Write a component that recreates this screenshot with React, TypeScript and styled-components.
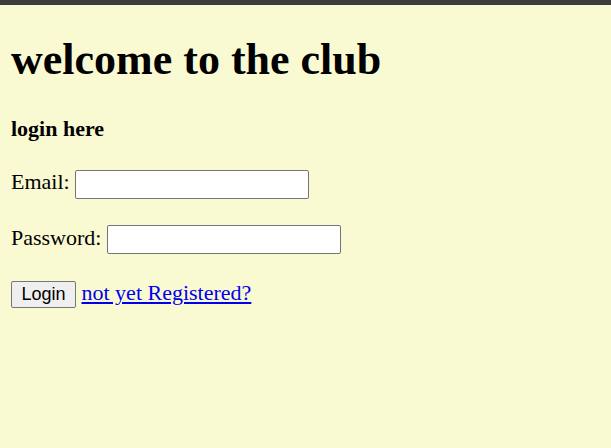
import React from "react";
import styled, { createGlobalStyle } from "styled-components";

const Global = createGlobalStyle`
  html, body { margin: 0; padding: 0; }
  body {
    background: #fafad2;
    font-family: "Liberation Serif", "Times New Roman", serif;
    color: #000;
    min-height: 448px;
  }
`;

const TopBar = styled.div`
  height: 5px;
  background: #3c3c3c;
`;

const Page = styled.main`
  padding: 0 11px;
  display: flow-root;
`;

const Title = styled.h1`
  font-size: 44px;
  font-weight: bold;
  margin: 29px 0 31px;
`;

const Subtitle = styled.h3`
  font-size: 22px;
  font-weight: bold;
  margin: 0 0 27px;
`;

const Form = styled.form`
  margin: 0;
`;

const Row = styled.p`
  font-size: 22px;
  margin: 0 0 26px;
`;

const Field = styled.input`
  width: 234px;
  height: 29px;
  box-sizing: border-box;
  border: 1px solid #767676;
  border-radius: 2px;
  background: #fff;
  font-family: "Liberation Sans", Arial, sans-serif;
  font-size: 17px;
  padding: 1px 2px;
  vertical-align: baseline;
`;

const Button = styled.button`
  font-family: "Liberation Sans", Arial, sans-serif;
  font-size: 18px;
  height: 27px;
  width: 65px;
  padding: 0 6px;
  border: 1px solid #767676;
  border-radius: 2px;
  background: #efefef;
  color: #000;
`;

const Link = styled.a`
  color: #0000ee;
  text-decoration: underline;
`;

export default function App() {
  return (
    <>
      <Global />
      <TopBar />
      <Page>
        <Title>welcome to the club</Title>
        <Subtitle>login here</Subtitle>
        <Form onSubmit={(e) => e.preventDefault()}>
          <Row>
            Email: <Field type="text" name="email" />
          </Row>
          <Row>
            Password: <Field type="password" name="password" />
          </Row>
          <Row>
            <Button type="submit">Login</Button> <Link href="#">not yet Registered?</Link>
          </Row>
        </Form>
      </Page>
    </>
  );
}
